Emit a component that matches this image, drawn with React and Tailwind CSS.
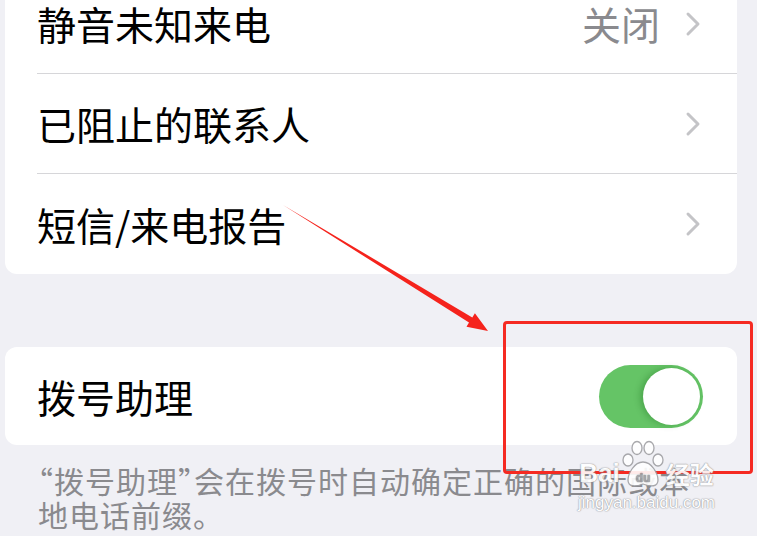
const cjk = { fontFamily: '"Noto Sans CJK SC", "Noto Sans", sans-serif' };

function Chevron() {
  return (
    <svg width="18" height="26" viewBox="0 0 18 26" className="shrink-0">
      <path d="M4 3 L14 13 L4 23" fill="none" stroke="#c4c4c7" strokeWidth="3" strokeLinecap="round" strokeLinejoin="round" />
    </svg>
  );
}

function Row({ label, value, last }) {
  return (
    <div className="pl-[32px]">
      <div className={`flex h-[100px] items-center pr-[35px] ${last ? '' : 'border-b border-[#d6d6d9]'}`}>
        <span className="flex-1 text-[39px] leading-none text-black">{label}</span>
        {value && <span className="mr-[24px] text-[39px] leading-none text-[#8a8a8e]">{value}</span>}
        <Chevron />
      </div>
    </div>
  );
}

function Toggle() {
  return (
    <div className="flex h-[63px] w-[104px] items-center justify-end rounded-full bg-[#65c466] pr-[3px]">
      <div className="h-[57px] w-[57px] rounded-full bg-white shadow-[-3px_0_6px_rgba(0,80,0,0.25)]" />
    </div>
  );
}

function Watermark() {
  return (
    <div className="pointer-events-none absolute left-[578px] top-[440px] flex flex-col items-center opacity-90" style={{ fontFamily: '"Liberation Sans", Arial, sans-serif' }}>
      <div className="flex items-end text-white [text-shadow:0_0_1.5px_#8a8a8e,0_0_1px_#8a8a8e]">
        <span className="mb-[2px] text-[26px] font-bold leading-none">Bai</span>
        <svg width="46" height="50" viewBox="0 0 46 50" className="-mb-[2px]">
          <g fill="white" stroke="#a0a0a4" strokeWidth="1.3">
            <ellipse cx="8" cy="20" rx="5" ry="6" />
            <ellipse cx="17" cy="8" rx="5" ry="6.5" />
            <ellipse cx="29" cy="8" rx="5" ry="6.5" />
            <ellipse cx="38" cy="20" rx="5" ry="6" />
            <path d="M23 22 C14 22 8 34 8 40 C8 47 15 47 23 44 C31 47 38 47 38 40 C38 34 32 22 23 22 Z" />
          </g>
          <text x="23" y="42" textAnchor="middle" fontSize="12" fontWeight="bold" fill="#a0a0a4" stroke="none">du</text>
        </svg>
        <span className="mb-[2px] text-[24px] font-bold leading-none" style={cjk}>经验</span>
      </div>
      <span className="mt-[6px] text-[17px] leading-none text-white [text-shadow:0_0_1.5px_#8a8a8e,0_0_1px_#8a8a8e]">jingyan.baidu.com</span>
    </div>
  );
}

export default function App() {
  return (
    <div className="relative h-[536px] w-full overflow-hidden bg-[#f0f0f5]" style={cjk}>
      <div className="-mt-[26px] ml-[5px] w-[732px] overflow-hidden rounded-[12px] bg-white">
        <Row label="静音未知来电" value="关闭" />
        <Row label="已阻止的联系人" />
        <Row label="短信/来电报告" last />
      </div>

      <div className="ml-[5px] mt-[73px] flex h-[98px] w-[732px] items-center rounded-[12px] bg-white pl-[32px] pr-[34px]">
        <span className="flex-1 text-[39px] leading-none text-black">拨号助理</span>
        <Toggle />
      </div>

      <p className="mt-[18px] pl-[38px] pr-[50px] text-[30px] leading-[34px] tracking-[1px] text-[#8a8a8e]">
        <span className="[font-feature-settings:'halt']">“</span>拨号助理<span className="[font-feature-settings:'halt']">”</span>会在拨号时自动确定正确的国际或本地电话前缀。
      </p>

      {/* annotation */}
      <svg className="pointer-events-none absolute left-0 top-0" width="757" height="536">
        <polygon points="283,205 469,322.6 466.5,326.8 488,331 474.9,313.2 472.3,317.4" fill="#f5231c" />
      </svg>
      <div className="pointer-events-none absolute left-[503px] top-[321px] h-[153px] w-[250px] rounded-[4px] border-[3px] border-[#f52a22]" />

      <Watermark />
    </div>
  );
}
